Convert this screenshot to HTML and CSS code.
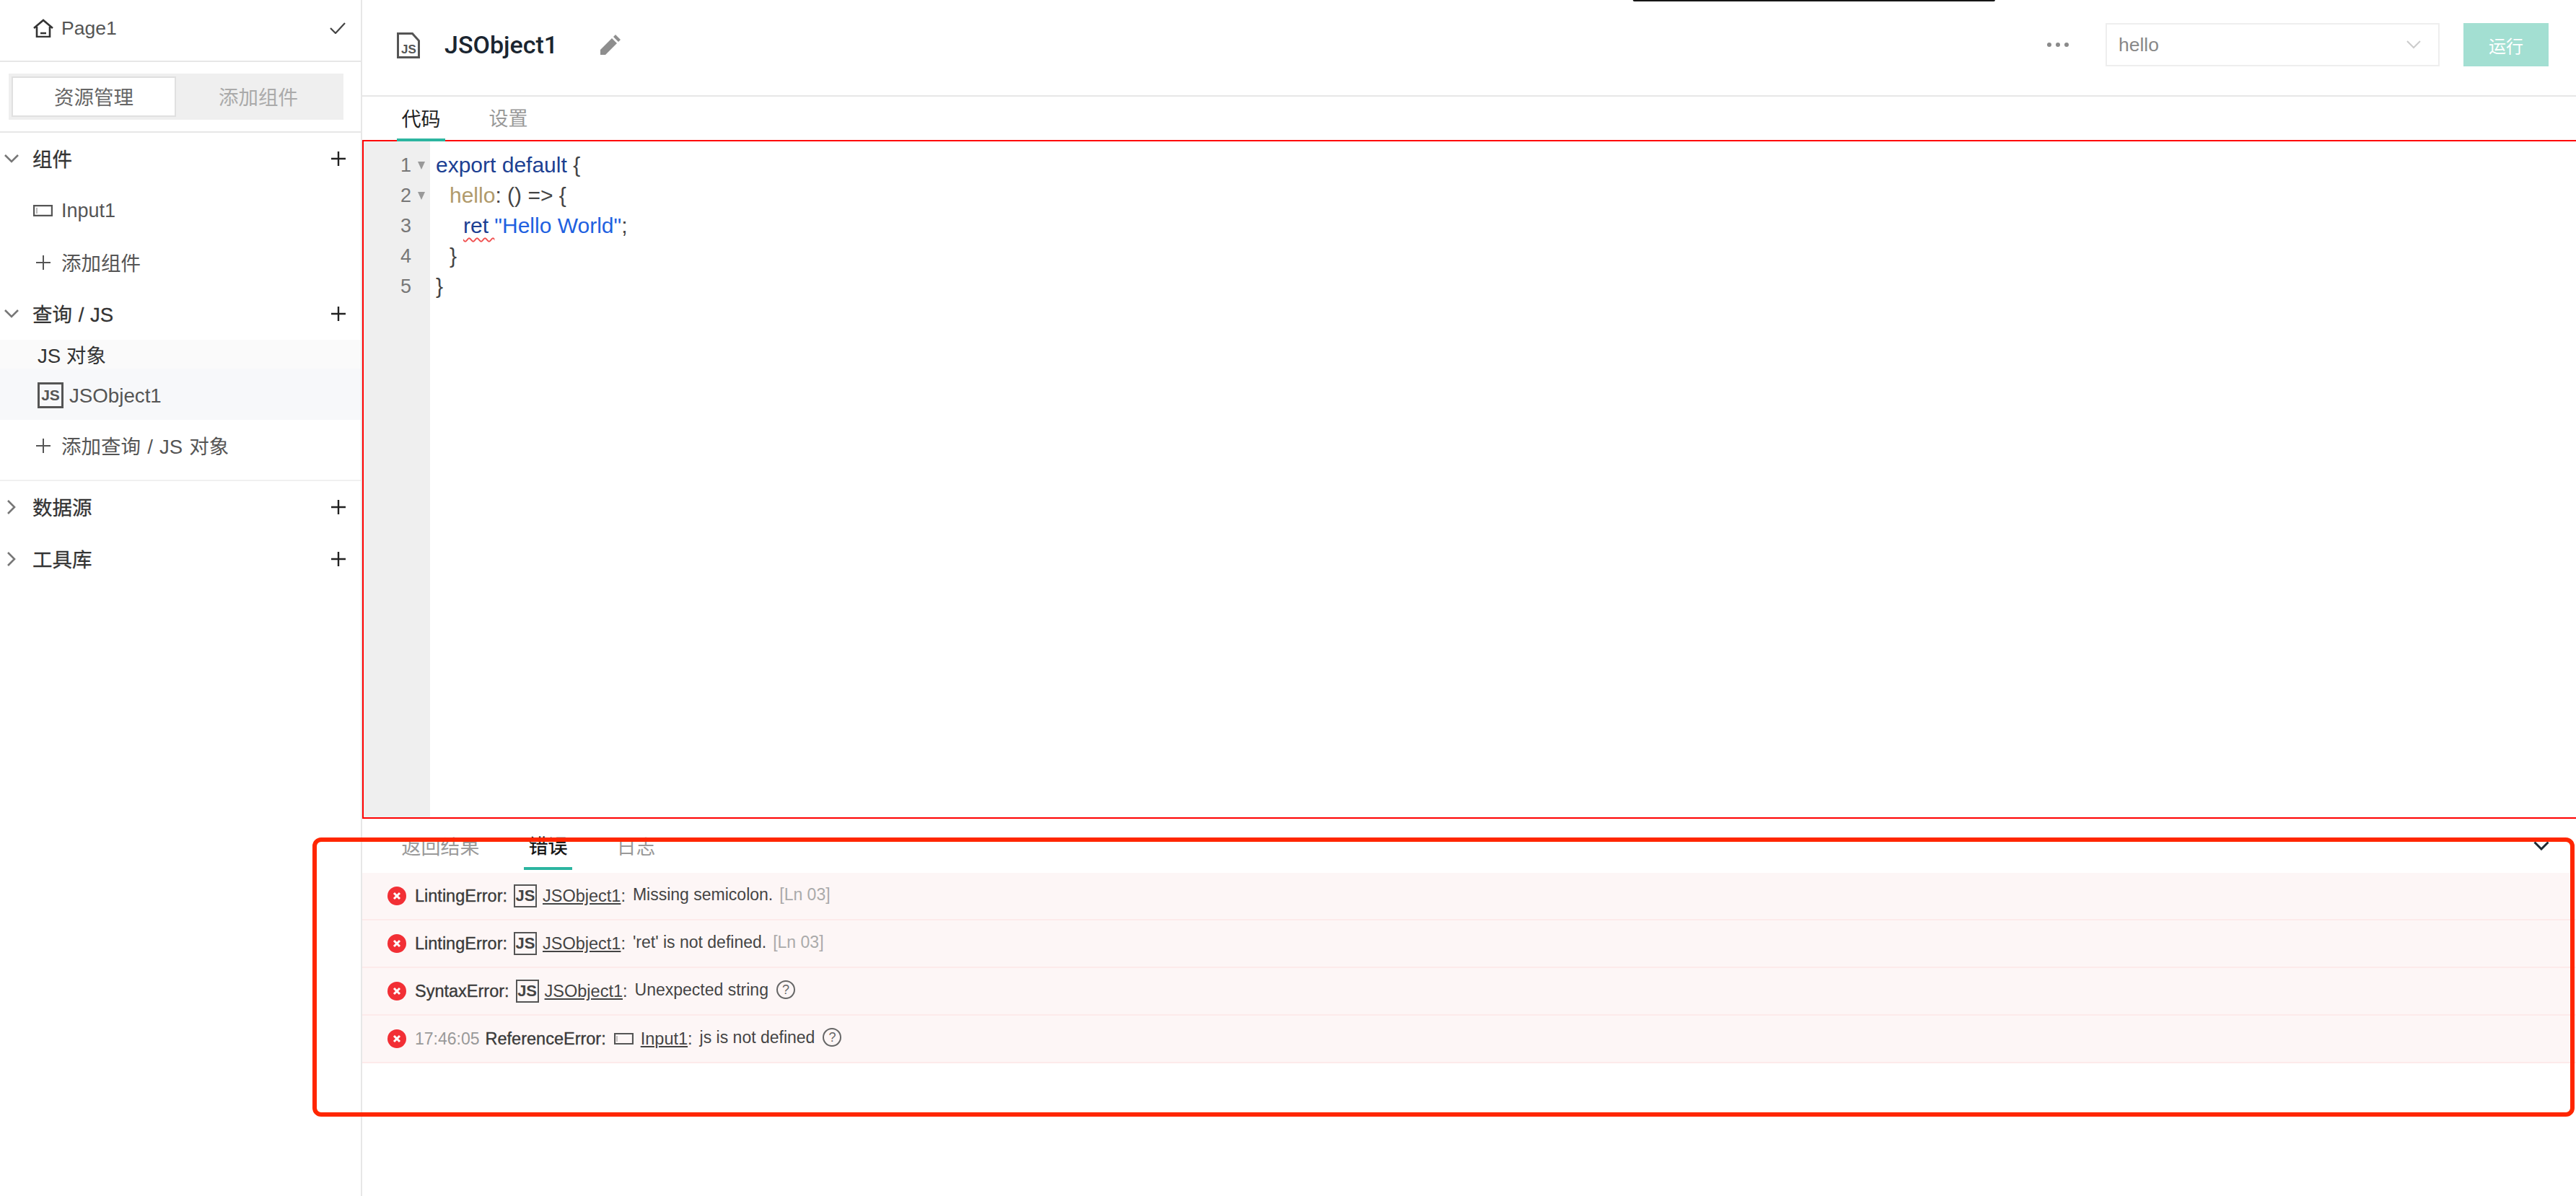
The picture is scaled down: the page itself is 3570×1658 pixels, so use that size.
FILE: index.html
```html
<!DOCTYPE html>
<html lang="zh">
<head>
<meta charset="utf-8">
<title>JSObject1</title>
<link rel="stylesheet" href="styles.css">
</head>
<body>
<div class="app">
  <aside class="sidebar">
    <div class="page-row">
      <svg class="home" viewBox="0 0 28 26"><path d="M1 13 14 2l13 11M5 11v14h18V11M10 20h8" fill="none" stroke="#333" stroke-width="2.6"/></svg>
      <span class="page-name">Page1</span>
      <svg class="check" viewBox="0 0 22 16"><path d="M1 8l7 7L21 1" fill="none" stroke="#444" stroke-width="2.2"/></svg>
    </div>
    <div class="seg-wrap">
      <div class="seg">
        <div class="seg-item seg-active">资源管理</div>
        <div class="seg-item">添加组件</div>
      </div>
    </div>
    <div class="section">
      <svg class="chev-down" viewBox="0 0 20 12"><path d="M1 1l9 9 9-9" fill="none" stroke="#777" stroke-width="2.6"/></svg>
      <span class="section-label">组件</span>
      <svg class="plus" viewBox="0 0 20 20"><path d="M10 0v20M0 10h20" stroke="#222" stroke-width="2.4"/></svg>
    </div>
    <div class="item">
      <svg class="input-icon" viewBox="0 0 27 16"><path d="M1 1h25v14H1z" fill="none" stroke="#555" stroke-width="2.4"/><path d="M5 4v8" stroke="#888" stroke-width="1.2"/></svg>
      <span>Input1</span>
    </div>
    <div class="item add">
      <svg class="add-plus" viewBox="0 0 20 20"><path d="M10 0v20M0 10h20" stroke="#555" stroke-width="2"/></svg>
      <span class="add-text">添加组件</span>
    </div>
    <div class="section">
      <svg class="chev-down" viewBox="0 0 20 12"><path d="M1 1l9 9 9-9" fill="none" stroke="#777" stroke-width="2.6"/></svg>
      <span class="section-label">查询 / JS</span>
      <svg class="plus" viewBox="0 0 20 20"><path d="M10 0v20M0 10h20" stroke="#222" stroke-width="2.4"/></svg>
    </div>
    <div class="group-title">JS 对象</div>
    <div class="group-item">
      <span class="js-badge">JS</span>
      <span>JSObject1</span>
    </div>
    <div class="item add add-last">
      <svg class="add-plus" viewBox="0 0 20 20"><path d="M10 0v20M0 10h20" stroke="#555" stroke-width="2"/></svg>
      <span class="add-text">添加查询 / JS 对象</span>
    </div>
    <div class="section">
      <svg class="chev-right" viewBox="0 0 12 20"><path d="M1 1l9 9-9 9" fill="none" stroke="#777" stroke-width="2.6"/></svg>
      <span class="section-label">数据源</span>
      <svg class="plus" viewBox="0 0 20 20"><path d="M10 0v20M0 10h20" stroke="#222" stroke-width="2.4"/></svg>
    </div>
    <div class="section">
      <svg class="chev-right" viewBox="0 0 12 20"><path d="M1 1l9 9-9 9" fill="none" stroke="#777" stroke-width="2.6"/></svg>
      <span class="section-label">工具库</span>
      <svg class="plus" viewBox="0 0 20 20"><path d="M10 0v20M0 10h20" stroke="#222" stroke-width="2.4"/></svg>
    </div>
  </aside>

  <main class="main">
    <header class="header">
      <svg class="file-icon" viewBox="0 0 32 36"><path d="M1.5 1.5h20l9 10v23h-29z" fill="none" stroke="#555" stroke-width="3"/><text x="6" y="29" class="file-text">JS</text></svg>
      <h1 class="title">JSObject1</h1>
      <svg class="pencil" viewBox="0 0 28 28"><path d="M0 28v-7L16 5l7 7L7 28zM18 3l3-3 7 7-3 3z" fill="#8e8e8e"/></svg>
      <div class="spacer"></div>
      <svg class="dots" viewBox="0 0 32 8"><circle cx="4" cy="4" r="3" fill="#8a8a8a"/><circle cx="16" cy="4" r="3" fill="#8a8a8a"/><circle cx="28" cy="4" r="3" fill="#8a8a8a"/></svg>
      <div class="select">
        <span>hello</span>
        <svg class="select-chev" viewBox="0 0 20 12"><path d="M1 1l9 9 9-9" fill="none" stroke="#ccc" stroke-width="2"/></svg>
      </div>
      <button class="run">运行</button>
    </header>

    <nav class="tabs">
      <span class="tab tab-active">代码</span>
      <span class="tab">设置</span>
    </nav>

    <section class="editor">
      <div class="gutter">
        <div class="ln">1<i class="fold"></i></div>
        <div class="ln">2<i class="fold"></i></div>
        <div class="ln">3</div>
        <div class="ln">4</div>
        <div class="ln">5</div>
      </div>
      <div class="code">
        <div class="cl"><span class="kw">export default</span> {</div>
        <div class="cl in1"><span class="prop">hello</span>: () =&gt; {</div>
        <div class="cl in2"><span class="kw lint">ret </span><span class="str">"Hello World"</span>;</div>
        <div class="cl in1">}</div>
        <div class="cl">}</div>
      </div>
    </section>

    <section class="results">
      <nav class="tabs result-tabs">
        <span class="tab">返回结果</span>
        <span class="tab tab-active">错误</span>
        <span class="tab">日志</span>
        <svg class="collapse" viewBox="0 0 22 13"><path d="M1.5 1.5 11 11l9.5-9.5" fill="none" stroke="#1c2a33" stroke-width="3"/></svg>
      </nav>
      <div class="err">
        <svg class="err-icon" viewBox="0 0 26 26"><circle cx="13" cy="13" r="13" fill="#f22f35"/><path d="M9 9l8 8M17 9l-8 8" stroke="#fff" stroke-width="3"/></svg>
        <span class="label">LintingError:</span>
        <span class="mini-js">JS</span>
        <span class="ref"><u>JSObject1</u>:</span>
        <span class="msg">Missing semicolon.</span>
        <span class="ln-ref">[Ln 03]</span>
      </div>
      <div class="err">
        <svg class="err-icon" viewBox="0 0 26 26"><circle cx="13" cy="13" r="13" fill="#f22f35"/><path d="M9 9l8 8M17 9l-8 8" stroke="#fff" stroke-width="3"/></svg>
        <span class="label">LintingError:</span>
        <span class="mini-js">JS</span>
        <span class="ref"><u>JSObject1</u>:</span>
        <span class="msg">'ret' is not defined.</span>
        <span class="ln-ref">[Ln 03]</span>
      </div>
      <div class="err">
        <svg class="err-icon" viewBox="0 0 26 26"><circle cx="13" cy="13" r="13" fill="#f22f35"/><path d="M9 9l8 8M17 9l-8 8" stroke="#fff" stroke-width="3"/></svg>
        <span class="label">SyntaxError:</span>
        <span class="mini-js">JS</span>
        <span class="ref"><u>JSObject1</u>:</span>
        <span class="msg">Unexpected string</span>
        <span class="help">?</span>
      </div>
      <div class="err">
        <svg class="err-icon" viewBox="0 0 26 26"><circle cx="13" cy="13" r="13" fill="#f22f35"/><path d="M9 9l8 8M17 9l-8 8" stroke="#fff" stroke-width="3"/></svg>
        <span class="time">17:46:05</span>
        <span class="label">ReferenceError:</span>
        <svg class="mini-input" viewBox="0 0 27 16"><path d="M1 1h25v14H1z" fill="none" stroke="#555" stroke-width="2.2"/><path d="M4 4v8" stroke="#888" stroke-width="1"/></svg>
        <span class="ref"><u>Input1</u>:</span>
        <span class="msg">js is not defined</span>
        <span class="help">?</span>
      </div>
    </section>
  </main>

  <div class="notch"></div>
  <div class="annotation"></div>
</div>
</body>
</html>
```

FILE: styles.css
```css
* { box-sizing: border-box; }
html, body { margin: 0; padding: 0; background: #fff; }
body {
  font-family: "Liberation Sans", "Noto Sans CJK SC", sans-serif;
  color: #555;
  overflow: hidden;
}
.app { position: relative; display: flex; width: 3570px; height: 1658px; overflow: hidden; }

/* sidebar */
.sidebar { flex: 0 0 502px; border-right: 2px solid #e7e7e7; }
.page-row {
  display: flex; align-items: center;
  height: 86px; padding: 0 21px 6px 46px;
  border-bottom: 2px solid #e7e7e7;
  font-size: 26.5px;
}
.home { width: 28px; height: 26px; margin-right: 11px; }
.page-name { flex: 1; }
.check { width: 22px; height: 16px; }
.seg-wrap { height: 98px; padding: 16px 24px 0 12px; border-bottom: 2px solid #e7e7e7; }
.seg { display: flex; height: 64px; padding: 4px; background: #efefef; }
.seg-item {
  display: flex; align-items: center; justify-content: center;
  flex: 0 0 228px; padding-bottom: 3px; font-size: 27.5px; color: #aaa;
}
.seg-active { background: #fff; border: 2px solid #e0e0e0; color: #666; }
.section { display: flex; align-items: center; height: 72px; padding-right: 21px; position: relative; }
.section-label { flex: 1; margin-left: 45px; padding-bottom: 3px; font-size: 27.5px; word-spacing: 1px; color: #333; -webkit-text-stroke: 0.3px #333; }
.chev-down { position: absolute; left: 6px; top: 30px; width: 20px; height: 12px; }
.chev-right { position: absolute; left: 10px; top: 26px; width: 12px; height: 20px; }
.plus { width: 20px; height: 20px; }
.item { display: flex; align-items: center; height: 72px; padding-left: 46px; font-size: 27px; }
.input-icon { width: 27px; height: 16px; margin-right: 12px; }
.add { height: 71px; padding-left: 50px; font-size: 27.5px; }
.add-text { padding-bottom: 2px; word-spacing: 1.5px; }
.add-plus { width: 20px; height: 20px; margin-right: 15px; }
.add-last { height: 85px; padding-bottom: 12px; border-bottom: 2px solid #f0f0f0; }
.group-title {
  display: flex; align-items: center;
  height: 40px; padding-left: 52px;
  background: #fafafa; color: #333; font-size: 27.6px;
}
.group-item {
  display: flex; align-items: center;
  height: 71px; padding: 4px 0 0 52px;
  background: #f7f8fa; font-size: 27.7px;
}
.js-badge {
  display: flex; align-items: center; justify-content: center;
  width: 36px; height: 36px; margin-right: 8px; margin-top: -2px;
  border: 3px solid #555; font-size: 21px; font-weight: 700;
}

/* header */
.main { flex: 1; min-width: 0; display: flex; flex-direction: column; }
.header {
  display: flex; align-items: center;
  flex: 0 0 134px; padding: 0 38px 8px 48px;
  border-bottom: 2px solid #e7e7e7;
}
.file-icon { width: 32px; height: 36px; margin-top: 2px; }
.file-text { font: 700 17px "Liberation Sans", sans-serif; fill: #555; }
.title { margin: 0 0 0 34px; font: 500 34px/1 Roboto, "Liberation Sans", sans-serif; color: #1a2530; }
.pencil { width: 28px; height: 28px; margin-left: 59px; }
.spacer { flex: 1; }
.dots { width: 32px; height: 8px; margin-right: 50px; }
.select {
  display: flex; align-items: center; justify-content: space-between;
  width: 463px; height: 60px; padding: 0 24px 0 16px;
  border: 2px solid #eee; font-size: 26.5px; color: #888;
}
.select-chev { width: 20px; height: 12px; }
.run {
  width: 118px; height: 60px; margin-left: 33px;
  border: 0; background: #a3dfd2; color: #fff;
  font: 24px "Liberation Sans", "Noto Sans CJK SC", sans-serif;
}

/* tabs */
.tabs { display: flex; flex: 0 0 60px; gap: 54px; padding-left: 48px; }
.tab {
  display: flex; align-items: center; justify-content: center;
  padding: 0 6.5px 4px; font-size: 27px; color: #999;
}
.tab-active { color: #1f1f1f; border-bottom: 4px solid #2cb5a0; padding-bottom: 0; margin-bottom: -2px; position: relative; }

/* editor */
.editor {
  display: flex; flex: 0 0 941px;
  border: 2px solid #f00; border-right: 0;
}
.gutter { flex: 0 0 92px; padding-top: 12px; background: #efefef; }
.ln {
  position: relative;
  height: 42px; line-height: 42px; padding-left: 51px;
  font-size: 27px; color: #777;
}
.fold {
  position: absolute; left: 75px; top: 16px;
  width: 0; height: 0;
  border-left: 5.5px solid transparent; border-right: 5.5px solid transparent;
  border-top: 11px solid #999;
}
.code { padding: 12px 0 0 8px; font-size: 30px; color: #444; }
.cl { height: 42px; line-height: 42px; white-space: pre; }
.in1 { padding-left: 19px; }
.in2 { padding-left: 38px; }
.kw { color: #1c3f92; }
.prop { color: #b09a6b; }
.str { color: #2060e0; }
.lint { text-decoration: underline wavy #f05050 2px; text-underline-offset: 6px; }

/* results */
.results { display: flex; flex-direction: column; }
.result-tabs { flex: 0 0 75px; position: relative; gap: 55px; padding-top: 15px; }
.result-tabs .tab { padding: 0 6.5px 15px; }
.result-tabs .tab-active { padding-bottom: 10px; margin-bottom: 4px; color: #111; -webkit-text-stroke: 0.3px #111; }
.collapse { position: absolute; right: 37px; top: 31px; width: 22px; height: 13px; }
.err {
  display: flex; align-items: center;
  height: 66px; padding-left: 35px;
  background: #fdf6f6; border-bottom: 2px solid #fdeaea;
  font-size: 23.5px; color: #444;
}
.err-icon { width: 26px; height: 26px; margin-right: 12px; }
.label { color: #3a3a3a; -webkit-text-stroke: 0.35px #3a3a3a; }
.mini-js {
  display: flex; align-items: center; justify-content: center;
  width: 32px; height: 32px; margin: 0 8px 0 9px;
  border: 2px solid #555; font-size: 22px; font-weight: 700; color: #444;
}
.ref { margin-right: 10px; }
.msg { position: relative; top: -2px; font-size: 23px; }
.ln-ref { position: relative; top: -2px; margin-left: 9px; font-size: 23px; color: #aaa; }
.help {
  display: flex; align-items: center; justify-content: center;
  position: relative; top: -2px;
  width: 26px; height: 26px; margin-left: 11px;
  border: 2px solid #666; border-radius: 50%;
  font-size: 18px; color: #666;
}
.time { margin-right: 8px; font-size: 23px; color: #999; }
.mini-input { width: 27px; height: 16px; margin: 0 10px 0 11px; }

/* overlays */
.notch {
  position: absolute; left: 2263px; top: 0;
  width: 502px; height: 2px;
  background: #161616; border-radius: 0 0 2px 2px;
}
.annotation {
  position: absolute; left: 433px; top: 1161px;
  width: 3135px; height: 387px;
  border: 6px solid #ff2600; border-radius: 12px;
}
```
